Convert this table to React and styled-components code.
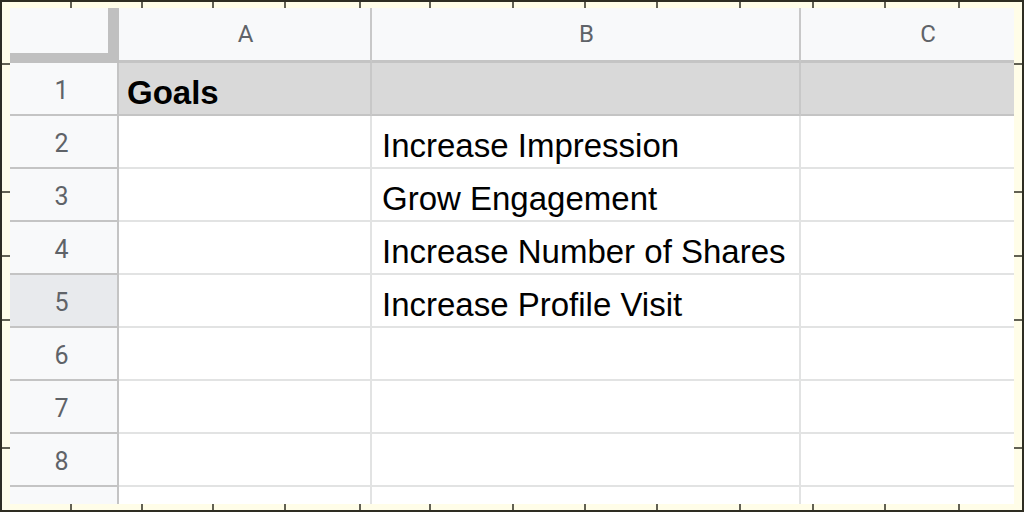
import styled, { createGlobalStyle } from "styled-components";

const GlobalStyle = createGlobalStyle`
  html, body {
    margin: 0;
    padding: 0;
    background: #fffde8;
  }
  * {
    box-sizing: border-box;
  }
`;

const Frame = styled.div`
  position: relative;
  width: 1024px;
  height: 512px;
  background: #fffde8;
  border: 2px solid #2e2d22;
  padding: 6px 8px;
  overflow: hidden;
`;

const Ticks = styled.svg`
  position: absolute;
  left: -2px;
  top: -2px;
  pointer-events: none;
`;

const Sheet = styled.div`
  display: grid;
  grid-template-columns: 109px 253px 429px 254px;
  grid-auto-rows: 53px;
  grid-template-rows: 55px;
  height: 496px;
  overflow: hidden;
  background: #fff;
`;

const Corner = styled.div`
  background: #f8f9fa;
  border-right: 11px solid #c0c0c0;
  border-bottom: 10px solid #c0c0c0;
`;

const ColHead = styled.div`
  display: flex;
  align-items: center;
  justify-content: center;
  background: #f8f9fa;
  border-bottom: 3px solid #c4c4c4;
  border-right: 2px solid #c8c8c8;
  font-family: Roboto, "Liberation Sans", sans-serif;
  font-size: 24px;
  color: #5f6368;
  padding: 0 0 0 2px;
`;

const RowHead = styled.div`
  display: flex;
  align-items: center;
  justify-content: center;
  background: ${(p) => (p.active ? "#e8eaed" : "#f8f9fa")};
  border-right: 2px solid #c4c4c4;
  border-bottom: 2px solid #c4c4c4;
  font-family: Roboto, "Liberation Sans", sans-serif;
  font-size: 25px;
  color: #5f6368;
  padding: 4px 4px 0 0;
`;

const Cell = styled.div`
  display: flex;
  align-items: center;
  padding: 8px 10px 0;
  background: ${(p) => (p.header ? "#d9d9d9" : "#fff")};
  border-bottom: 2px solid ${(p) => (p.header ? "#c4c4c4" : "#e2e3e3")};
  border-right: 2px solid ${(p) => (p.header ? "#c8c8c8" : "#e2e3e3")};
  font-family: "Liberation Sans", Arial, sans-serif;
  font-size: 33px;
  font-weight: ${(p) => (p.bold ? 700 : 400)};
  color: #000;
  white-space: nowrap;
  overflow: hidden;
  padding-left: ${(p) => (p.bold ? "8px" : "10px")};
`;

const rows = [
  ["Goals", ""],
  ["", "Increase Impression"],
  ["", "Grow Engagement"],
  ["", "Increase Number of Shares"],
  ["", "Increase Profile Visit"],
  ["", ""],
  ["", ""],
  ["", ""],
  ["", ""],
];

const topTicks = [71, 142, 213, 285, 360, 430, 513, 585, 657, 740, 813, 885, 959];
const sideTicks = [64, 192, 256, 320, 448];

const FrameTicks = () => (
  <Ticks width="1024" height="512" viewBox="0 0 1024 512">
    <g stroke="#2e2d22" strokeWidth="1.5">
      {topTicks.map((x) => (
        <g key={x}>
          <line x1={x} y1="0" x2={x} y2="8" />
          <line x1={x} y1="504" x2={x} y2="512" />
        </g>
      ))}
      {sideTicks.map((y) => (
        <g key={y}>
          <line x1="0" y1={y} x2="10" y2={y} />
          <line x1="1014" y1={y} x2="1024" y2={y} />
        </g>
      ))}
    </g>
  </Ticks>
);

// the last row is cut off by the frame, its number falls outside the view
const Row = ({ index, a, b, partial }) => {
  const header = index === 0;
  return (
    <>
      <RowHead active={index === 4}>{partial ? null : index + 1}</RowHead>
      <Cell header={header} bold={header}>
        {a}
      </Cell>
      <Cell header={header}>{b}</Cell>
      <Cell header={header} />
    </>
  );
};

const App = () => {
  return (
    <>
      <GlobalStyle />
      <Frame>
        <Sheet>
          <Corner />
          <ColHead>A</ColHead>
          <ColHead>B</ColHead>
          <ColHead>C</ColHead>
          {rows.map((r, i) => (
            <Row
              key={i}
              index={i}
              a={r[0]}
              b={r[1]}
              partial={i === rows.length - 1}
            />
          ))}
        </Sheet>
        <FrameTicks />
      </Frame>
    </>
  );
};

export default App;
